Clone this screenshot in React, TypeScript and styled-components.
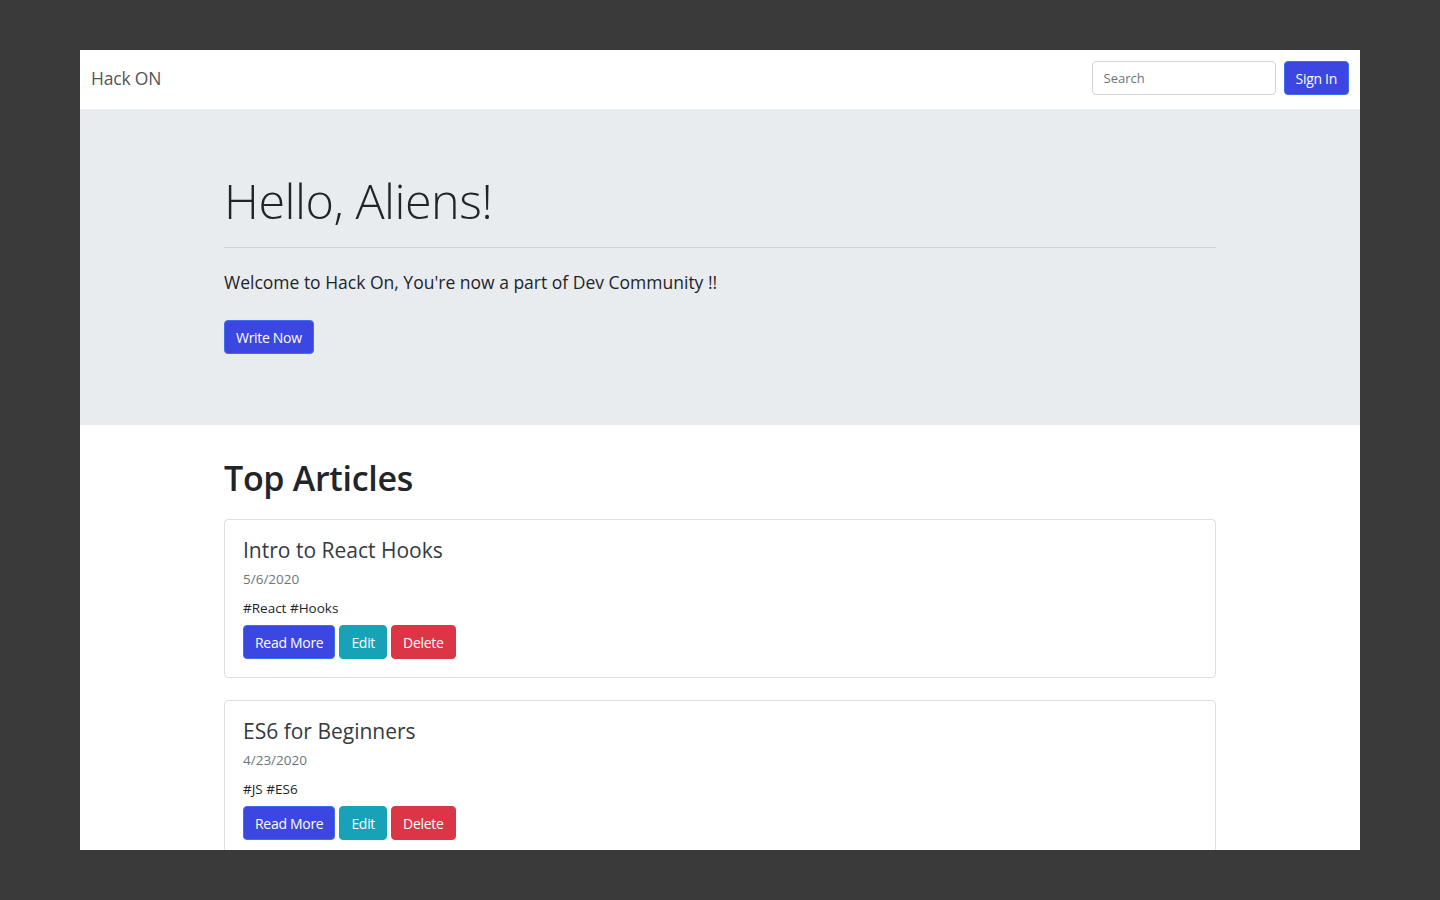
import React from "react";
import styled, { createGlobalStyle } from "styled-components";

const Global = createGlobalStyle`
  html, body { margin: 0; padding: 0; background: #3a3a3a; }
  body { font-family: "Open Sans", "Noto Sans", sans-serif; color: #212529; }
  * { box-sizing: border-box; }
`;

const Stage = styled.div`
  width: 1440px;
  height: 900px;
  padding: 50px 80px;
`;

const Frame = styled.div`
  width: 1280px;
  height: 800px;
  background: #fff;
  overflow: hidden;
  display: flex;
  flex-direction: column;
`;

const NavBar = styled.nav`
  height: 59px;
  flex: none;
  display: flex;
  align-items: center;
  justify-content: space-between;
  padding: 0 11px 3px;
`;

const Brand = styled.div`
  font-size: 17.5px;
  color: #555;
  letter-spacing: -0.2px;
`;

const SearchForm = styled.form`
  display: flex;
  align-items: center;
  gap: 8px;
`;

const SearchInput = styled.input`
  width: 184px;
  height: 34px;
  border: 1px solid #ced4da;
  border-radius: 4px;
  padding: 0 11px;
  font-family: inherit;
  font-size: 13px;
  color: #495057;
  &::placeholder { color: #6c757d; }
`;

const Button = styled.button<{ $tone: "primary" | "info" | "danger" }>`
  height: 34px;
  padding: 0 11px;
  border-radius: 4px;
  border: 1px solid
    ${(p) => (p.$tone === "primary" ? "#3d6ef0" : p.$tone === "info" ? "#17a2b8" : "#dc3545")};
  background: ${(p) =>
    p.$tone === "primary" ? "#3c46e0" : p.$tone === "info" ? "#17a2b8" : "#dc3545"};
  color: #fff;
  font-family: inherit;
  font-size: 14px;
  letter-spacing: -0.3px;
  cursor: pointer;
`;

const Jumbotron = styled.section`
  height: 316px;
  flex: none;
  background: #e9ecef;
  padding-top: 61px;
`;

const Container = styled.div`
  width: 992px;
  margin: 0 auto;
`;

const Display = styled.h1`
  margin: 0;
  font-size: 48.5px;
  font-weight: 300;
  line-height: 60px;
  letter-spacing: -0.5px;
  color: #212529;
`;

const Rule = styled.hr`
  margin: 17px 0 0;
  border: 0;
  border-top: 1px solid rgba(0, 0, 0, 0.1);
`;

const Lead = styled.p`
  margin: 20px 0 24px;
  font-size: 17.5px;
  line-height: 28px;
  color: #212529;
`;

const Content = styled.main`
  padding-top: 33px;
`;

const SectionTitle = styled.h2`
  margin: 0 0 21px;
  font-size: 34px;
  font-weight: 600;
  line-height: 40px;
  letter-spacing: -0.3px;
`;

const CardList = styled.div`
  display: flex;
  flex-direction: column;
  gap: 22px;
`;

const Card = styled.article`
  border: 1px solid rgba(0, 0, 0, 0.125);
  border-radius: 4px;
  padding: 18px;
`;

const CardTitle = styled.h5`
  margin: 0 0 5px;
  font-size: 21px;
  font-weight: 500;
  line-height: 25px;
  color: #343a40;
`;

const CardDate = styled.div`
  font-size: 13.5px;
  line-height: 22px;
  color: #6c757d;
  margin-bottom: 8px;
`;

const Tags = styled.div`
  font-size: 13.5px;
  line-height: 20px;
  color: #212529;
  margin-bottom: 7px;
`;

const Actions = styled.div`
  display: flex;
  gap: 4px;
`;

const articles = [
  { title: "Intro to React Hooks", date: "5/6/2020", tags: "#React #Hooks" },
  { title: "ES6 for Beginners", date: "4/23/2020", tags: "#JS #ES6" },
];

export default function App() {
  return (
    <>
      <Global />
      <Stage>
        <Frame>
          <NavBar>
            <Brand>Hack ON</Brand>
            <SearchForm onSubmit={(e) => e.preventDefault()}>
              <SearchInput placeholder="Search" />
              <Button $tone="primary" type="submit">Sign In</Button>
            </SearchForm>
          </NavBar>
          <Jumbotron>
            <Container>
              <Display>Hello, Aliens!</Display>
              <Rule />
              <Lead>Welcome to Hack On, You're now a part of Dev Community !!</Lead>
              <Button $tone="primary">Write Now</Button>
            </Container>
          </Jumbotron>
          <Content>
            <Container>
              <SectionTitle>Top Articles</SectionTitle>
              <CardList>
                {articles.map((a) => (
                  <Card key={a.title}>
                    <CardTitle>{a.title}</CardTitle>
                    <CardDate>{a.date}</CardDate>
                    <Tags>{a.tags}</Tags>
                    <Actions>
                      <Button $tone="primary">Read More</Button>
                      <Button $tone="info">Edit</Button>
                      <Button $tone="danger">Delete</Button>
                    </Actions>
                  </Card>
                ))}
              </CardList>
            </Container>
          </Content>
        </Frame>
      </Stage>
    </>
  );
}
